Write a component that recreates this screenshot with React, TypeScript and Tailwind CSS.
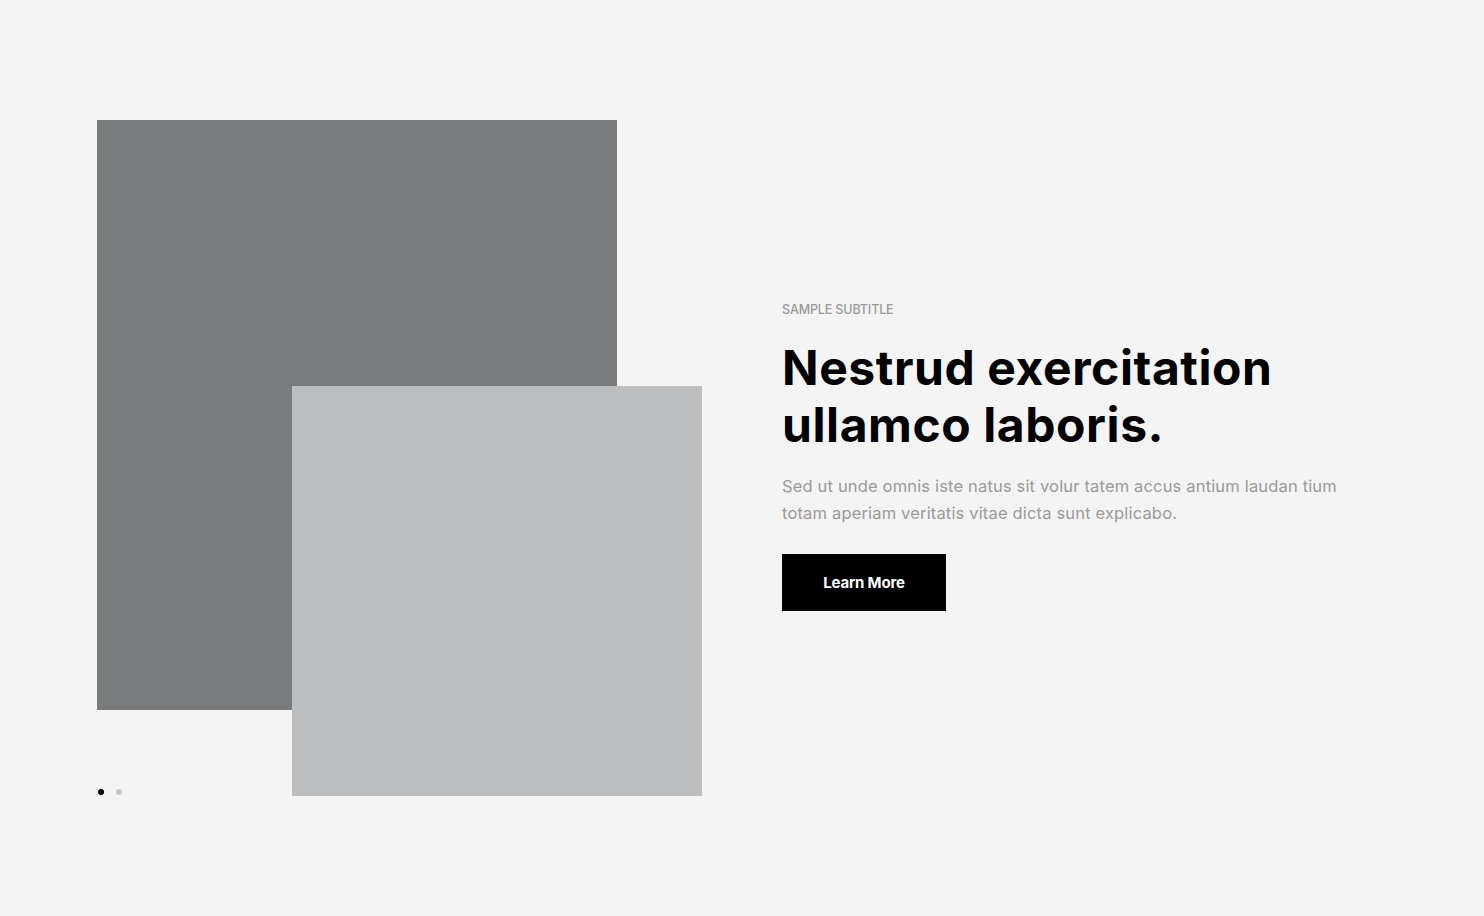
import React from "react";

const font = { fontFamily: "Inter, 'Noto Sans', sans-serif" };

const HeroImages = () => {
  return (
    <div className="relative w-[605px] h-[676px] shrink-0">
      <div className="w-[520px] h-[590px] bg-[#7a7b7c]"></div>
      <div className="absolute left-[195px] top-[266px] w-[410px] h-[410px] bg-[#bcbdbf]"></div>
      <div className="absolute left-[1px] top-[669px] flex gap-3">
        <span className="block w-[6px] h-[6px] rounded-full bg-black"></span>
        <span className="block w-[6px] h-[6px] rounded-full bg-[#c8c8c8]"></span>
      </div>
    </div>
  );
};

export default function App() {
  return (
    <div className="min-h-[916px] w-full bg-[#f4f4f4]" style={font}>
      <div className="flex items-center gap-20 pl-[97px] pt-[120px] pb-[120px]">
        <HeroImages />
        <div className="flex flex-col w-[580px] pb-[1px]">
          <span className="text-[12.5px] font-medium uppercase text-[#999999] tracking-[-0.01em] leading-none">
            Sample Subtitle
          </span>
          <h1 className="mt-[23px] text-[48px] font-bold leading-[57px] tracking-[0.012em] text-black">
            Nestrud exercitation
            <br />
            ullamco laboris.
          </h1>
          <p className="mt-[20px] text-[16.5px] leading-[27px] text-[#9a9a9a] tracking-[0.01em]">
            Sed ut unde omnis iste natus sit volur tatem accus antium laudan tium
            <br />
            totam aperiam veritatis vitae dicta sunt explicabo.
          </p>
          <button className="mt-[27px] w-[164px] h-[57px] bg-black text-white text-[15px] font-bold tracking-[-0.01em]">
            Learn More
          </button>
        </div>
      </div>
    </div>
  );
}
